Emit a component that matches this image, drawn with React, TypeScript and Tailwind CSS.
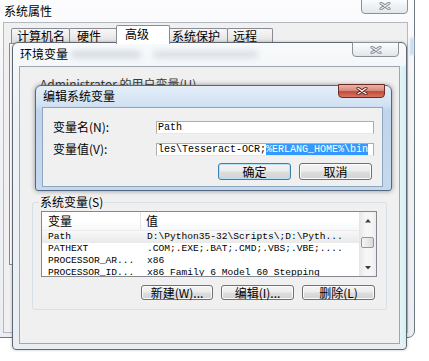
import React from 'react';

const CloseGlyph: React.FC<{ active?: boolean }> = ({ active }) => (
  <svg width="12" height="8" viewBox="0 0 12 8">
    <path d="M2 1.2 L10 6.8 M10 1.2 L2 6.8" stroke={active ? '#5b2018' : '#80868e'} strokeWidth="3" strokeLinecap="round" fill="none" />
    <path d="M2 1.2 L10 6.8 M10 1.2 L2 6.8" stroke={active ? '#ffffff' : '#eceef1'} strokeWidth="1.3" strokeLinecap="round" fill="none" />
  </svg>
);

const CaptionClose: React.FC<{ active?: boolean; className: string }> = ({ active, className }) => (
  <div
    className={`absolute flex items-center justify-center rounded-b-[4px] border ${
      active
        ? 'border-[#6d2a22] bg-[linear-gradient(180deg,#eab2a7_0%,#d98c7e_45%,#c44a38_55%,#d67565_100%)]'
        : 'border-[#8b9199] bg-[linear-gradient(180deg,#fcfdfd_0%,#eff2f5_50%,#e2e6eb_100%)]'
    } ${className}`}
  >
    <CloseGlyph active={active} />
  </div>
);

const Button: React.FC<{ children: React.ReactNode; className: string; primary?: boolean }> = ({ children, className, primary }) => (
  <div
    className={`flex items-center justify-center rounded-[3px] border bg-[linear-gradient(180deg,#f4f4f4_0%,#ececec_48%,#dedede_52%,#d2d2d2_100%)] ${
      primary ? 'border-[#3c7fb1] shadow-[inset_0_0_0_1px_#b6e1f7]' : 'border-[#707070] shadow-[inset_0_0_0_1px_#fbfbfb]'
    } ${className}`}
  >
    {children}
  </div>
);

const Arrow: React.FC<{ down?: boolean }> = ({ down }) => (
  <svg width="6" height="4" viewBox="0 0 6 4">
    <path d={down ? 'M0 0 L6 0 L3 3.5 Z' : 'M0 3.5 L6 3.5 L3 0 Z'} fill="#3c3c3c" />
  </svg>
);

const rows = [
  { name: 'Path', value: 'D:\\Python35-32\\Scripts\\;D:\\Pyth...', selected: true },
  { name: 'PATHEXT', value: '.COM;.EXE;.BAT;.CMD;.VBS;.VBE;....' },
  { name: 'PROCESSOR_AR...', value: 'x86' },
  { name: 'PROCESSOR_ID...', value: 'x86 Family 6 Model 60 Stepping' },
];

const SystemProperties = () => (
  <div className="absolute left-[-6px] top-[-8px] h-[346px] w-[421px] rounded-[7px] border border-[#6f7780] bg-[linear-gradient(180deg,#fdfdfe_0%,#f2f4f7_30%,#eaeef2_100%)]">
    <div className="h-[29px] pl-[9px] pt-[11px]">系统属性</div>
    <CaptionClose className="left-[366px] top-[5px] h-[16px] w-[47px]" />
    <div className="ml-[8px] h-[311px] w-[405px] border border-[#b3b9c1] bg-[#f0f0f0]">
      <div className="ml-[7px] mt-[2px] flex h-[18px] items-end">
        <div className="h-[15px] w-[59px] rounded-t-[2px] border border-b-0 border-[#898c95] bg-[linear-gradient(180deg,#f7f7f7_0%,#ececec_50%,#dfdfdf_100%)] pl-[5px]">计算机名</div>
        <div className="-ml-px h-[15px] w-[49px] rounded-t-[2px] border border-b-0 border-[#898c95] bg-[linear-gradient(180deg,#f7f7f7_0%,#ececec_50%,#dfdfdf_100%)] pl-[7px]">硬件</div>
        <div className="relative z-10 -mb-px -ml-[2px] h-[19px] w-[54px] rounded-t-[2px] border border-b-0 border-[#898c95] bg-white pl-[8px] pt-px">高级</div>
        <div className="-ml-[2px] h-[15px] w-[60px] rounded-t-[2px] border border-b-0 border-[#898c95] bg-[linear-gradient(180deg,#f7f7f7_0%,#ececec_50%,#dfdfdf_100%)] pl-[3px]">系统保护</div>
        <div className="-ml-px h-[15px] w-[46px] rounded-t-[2px] border border-b-0 border-[#898c95] bg-[linear-gradient(180deg,#f7f7f7_0%,#ececec_50%,#dfdfdf_100%)] pl-[5px]">远程</div>
      </div>
      <div className="ml-[5px] h-[222px] w-[393px] border border-[#898c95] bg-white" />
    </div>
  </div>
);

const EnvironmentVariables = () => (
  <div className="absolute left-[12px] top-[42px] h-[308px] w-[395px] rounded-b-[4px] rounded-t-[6px] border border-[#5f6872] bg-[linear-gradient(180deg,#f8fafb_0%,#eef2f5_20%,#e9eef2_100%)] shadow-[0_0_3px_rgba(0,0,0,0.25)]">
    <div className="relative h-[23px] pl-[7px] pt-[4px]">
      <span className="absolute left-[58px] top-[8px] h-[7px] w-[70px] rounded-full bg-[#c3ccd6] opacity-70 blur-[3px]" />
      <span className="absolute left-[140px] top-[8px] h-[7px] w-[105px] rounded-full bg-[#c3ccd6] opacity-60 blur-[3px]" />
      <span className="relative">环境变量</span>
    </div>
    <CaptionClose className="left-[339px] top-[-1px] h-[15px] w-[47px]" />
    <div className="absolute left-[387px] top-[23px] h-[278px] w-[6px] bg-[linear-gradient(90deg,#e6f5f7_0%,#d3eff2_100%)]" />
    <div className="ml-[6px] h-[278px] w-[381px] border border-[#9ea7b1] bg-[#f0f0f0]">
      {/* user variables group sits behind the edit dialog, only its caption peeks out */}
      <div className="ml-[20px] mt-[10px] h-[8px] overflow-hidden text-[#3a3a3a]">Administrator 的用户变量(U)</div>
      <div className="relative ml-[12px] mt-[117px] h-[108px] w-[355px] rounded-[3px] border border-[#d5dfe5]">
        <span className="absolute left-[6px] top-[-8px] bg-[#f0f0f0] px-px">系统变量(S)</span>
        <div className="ml-[8px] mt-[8px] flex h-[66px] w-[336px] border border-[#828790] bg-white">
          <div className="flex-1 overflow-hidden">
            <div className="flex h-[19px] items-center border-b border-[#ececec] bg-[linear-gradient(180deg,#ffffff_0%,#ffffff_50%,#f6f7f9_100%)]">
              <div className="flex h-full w-[99px] items-center border-r border-[#e5e5e5] pl-[6px]">变量</div>
              <div className="pl-[5px]">值</div>
            </div>
            {rows.map((r) => (
              <div
                key={r.name}
                className={`flex h-[12px] items-center whitespace-nowrap font-['Liberation_Mono',monospace] text-[9.6px] leading-[12px] ${
                  r.selected ? 'bg-[linear-gradient(180deg,#f8f8f8_0%,#e9e9e9_100%)]' : ''
                }`}
              >
                <div className="w-[99px] pl-[6px]">{r.name}</div>
                <div className="pl-[6px]">{r.value}</div>
              </div>
            ))}
          </div>
          <div className="flex w-[17px] flex-col border-l border-[#e6e6e6] bg-[linear-gradient(90deg,#e9e9e9_0%,#f6f6f6_35%,#f6f6f6_70%,#ececec_100%)]">
            <div className="flex h-[17px] items-center justify-center">
              <Arrow />
            </div>
            <div className="relative flex-1">
              <div className="absolute left-[1px] right-[2px] top-[8px] h-[11px] rounded-[2px] border border-[#979797] bg-[linear-gradient(90deg,#f5f5f5_0%,#e9e9e9_50%,#d9d9d9_100%)]" />
            </div>
            <div className="flex h-[17px] items-center justify-center">
              <Arrow down />
            </div>
          </div>
        </div>
        <div className="ml-[108px] mt-[8px] flex gap-[8px]">
          <Button className="h-[15px] w-[72px]">新建(W)...</Button>
          <Button className="h-[15px] w-[73px]">编辑(I)...</Button>
          <Button className="h-[15px] w-[73px]">删除(L)</Button>
        </div>
      </div>
    </div>
  </div>
);

const EditVariable = () => (
  <div className="absolute left-[35px] top-[85px] h-[106px] w-[357px] rounded-b-[3px] rounded-t-[6px] border border-[#54677f] bg-[linear-gradient(180deg,#e4eef8_0%,#d2e2f3_18%,#c0d5ec_24%,#c5d9ee_100%)] shadow-[0_0_5px_rgba(0,0,0,0.4)]">
    <div className="flex h-[21px] items-center pb-[2px] pl-[7px]">编辑系统变量</div>
    <CaptionClose active className="left-[302px] top-[-2px] h-[14px] w-[47px]" />
    <div className="ml-[6px] h-[80px] w-[341px] border border-[#8fa6c1] bg-[#f0f0f0]">
      <div className="mt-[12px] flex items-center pl-[10px]">
        <div className="w-[103px]">变量名(N):</div>
        <div className="flex h-[13px] w-[218px] items-center border border-[#abadb3] border-b-[#e3e9ef] bg-white pl-px font-['Liberation_Mono',monospace] text-[10px] leading-[11px]">
          Path
        </div>
      </div>
      <div className="mt-[8px] flex items-center pl-[10px]">
        <div className="w-[103px]">变量值(V):</div>
        <div className="flex h-[13px] w-[218px] items-center overflow-hidden whitespace-nowrap border border-[#abadb3] border-b-[#e3e9ef] bg-white pl-px font-['Liberation_Mono',monospace] text-[10px] leading-[11px]">
          <span>les\Tesseract-OCR;</span>
          <span className="bg-[#3399ff] text-white">%ERLANG_HOME%\bin</span>
        </div>
      </div>
      <div className="ml-[175px] mt-[7px] flex gap-[8px]">
        <Button primary className="h-[17px] w-[73px]">确定</Button>
        <Button className="h-[17px] w-[73px]">取消</Button>
      </div>
    </div>
  </div>
);

export default function App() {
  return (
    <div className="relative h-[361px] w-[429px] overflow-hidden bg-white font-['Noto_Sans_CJK_SC',sans-serif] text-[12px] leading-[14px] text-black">
      <SystemProperties />
      <div className="absolute left-[410px] top-[38px] h-[17px] w-[4px] bg-[#c5dbef] blur-[1px]" />
      <EnvironmentVariables />
      <EditVariable />
    </div>
  );
}
